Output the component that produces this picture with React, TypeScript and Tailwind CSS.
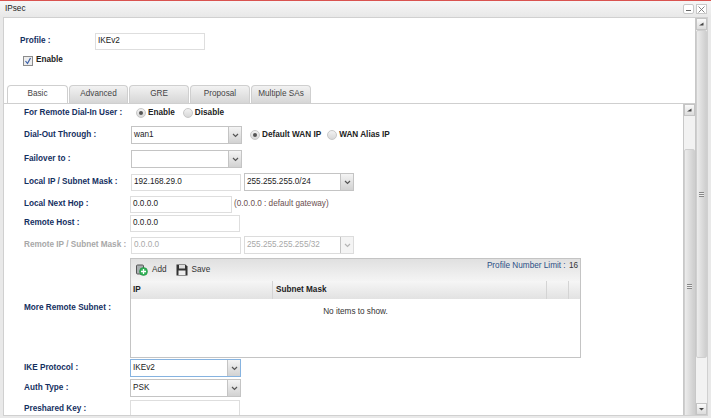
import type { ReactNode } from "react";

function Arrow({ disabled }: { disabled?: boolean }) {
  return (
    <div
      className={`flex h-full w-[13px] items-center justify-center border-l border-[#c4c4c4] ${
        disabled ? "bg-[#f4f4f4]" : "bg-gradient-to-b from-[#f4f4f4] to-[#d2d2d2]"
      }`}
    >
      <svg width="7" height="5" viewBox="0 0 7 5">
        <path d="M1 1l2.5 2.5L6 1" fill="none" stroke={disabled ? "#b5b5b5" : "#555"} strokeWidth="1.2" />
      </svg>
    </div>
  );
}

function Select({
  value,
  width,
  disabled,
  focused,
}: {
  value?: string;
  width: string;
  disabled?: boolean;
  focused?: boolean;
}) {
  return (
    <div
      className={`flex ${width} h-[18px] items-center border ${
        focused ? "border-[#86b3e0]" : disabled ? "border-[#dcdcdc]" : "border-[#c4c4c4]"
      } bg-white`}
    >
      <span className={`flex-1 pl-[2px] text-[8.2px] ${disabled ? "text-[#a8a8a8]" : "text-[#222]"}`}>{value}</span>
      <Arrow disabled={disabled} />
    </div>
  );
}

function Input({
  value,
  width = "w-[110px]",
  height = "h-[17px]",
  disabled,
}: {
  value?: string;
  width?: string;
  height?: string;
  disabled?: boolean;
}) {
  return (
    <div
      className={`flex ${width} ${height} items-center border border-[#dedede] pl-[2px] text-[8.2px] ${
        disabled ? "text-[#a8a8a8]" : "text-[#222]"
      } bg-white`}
    >
      {value}
    </div>
  );
}

function Radio({ checked, label }: { checked?: boolean; label: string }) {
  return (
    <div className="flex items-center gap-[2px]">
      <div className="flex h-[10px] w-[10px] items-center justify-center rounded-full border border-[#c8c8c8] bg-gradient-to-b from-[#f2f2f2] to-[#d8d8d8]">
        {checked && <div className="h-[4px] w-[4px] rounded-full bg-[#555]" />}
      </div>
      <span className="text-[8.2px] font-bold text-[#222]">{label}</span>
    </div>
  );
}

function Row({
  label,
  height,
  disabled,
  children,
}: {
  label: string;
  height: string;
  disabled?: boolean;
  children: ReactNode;
}) {
  return (
    <div className={`flex ${height} items-center`}>
      <div className={`w-[106px] shrink-0 whitespace-nowrap text-[8.2px] font-bold ${disabled ? "text-[#a8a8a8]" : "text-[#15305f]"}`}>
        {label}
      </div>
      {children}
    </div>
  );
}

function ScrollBar({ thumbTop, thumbHeight, noEnd }: { thumbTop: string; thumbHeight: string; noEnd?: boolean }) {
  return (
    <div className="flex w-[12px] shrink-0 flex-col overflow-hidden border-l border-[#c8c8c8] bg-[#f2f2f2]">
      <div className="flex h-[12px] shrink-0 items-center justify-center border border-[#c4c4c4] bg-gradient-to-b from-[#fafafa] to-[#dcdcdc]">
        <svg width="5" height="4" viewBox="0 0 5 4">
          <path d="M0 3.5L4.5 0.5V3.5Z" fill="#444" />
        </svg>
      </div>
      <div className="min-h-0 flex-1">
        <div className={`${thumbTop} ${thumbHeight} flex items-center justify-center rounded-[2px] border border-[#cfcfcf] bg-gradient-to-r from-[#ececec] to-[#cfcfcf]`}>
          <div className="h-[5px] w-[5px] bg-[repeating-linear-gradient(#888_0,#888_1px,#eee_1px,#eee_2px)]" />
        </div>
      </div>
      {!noEnd && (
        <div className="flex h-[12px] shrink-0 items-center justify-center border border-[#c4c4c4] bg-gradient-to-b from-[#fafafa] to-[#dcdcdc]">
          <svg width="5" height="4" viewBox="0 0 5 4">
            <path d="M0 1h5L2.5 3.5Z" fill="#444" />
          </svg>
        </div>
      )}
    </div>
  );
}

function Tab({ label, active, width }: { label: string; active?: boolean; width: string }) {
  return (
    <div
      className={`flex ${width} h-[18px] items-center justify-center rounded-t-[4px] border border-b-0 border-[#cfcfcf] text-[8.2px] text-[#444] ${
        active ? "bg-white" : "bg-gradient-to-b from-[#f2f2f2] to-[#d6d6d6]"
      }`}
    >
      {label}
    </div>
  );
}

export default function App() {
  return (
    <div className="flex h-[418px] w-[711px] flex-col overflow-hidden border-t border-[#d9534f] bg-[#e9e9e9] font-['Liberation_Sans',Arial,sans-serif]">
      <div className="flex h-[16px] shrink-0 items-center justify-between bg-gradient-to-b from-[#f6f6f6] to-[#e8e8e8] pl-[5px] pr-[4px]">
        <span className="text-[8.2px] text-[#222]">IPsec</span>
        <div className="flex gap-[2px]">
          <div className="flex h-[10px] w-[11px] items-end justify-center rounded-[2px] border border-[#c8c8c8] bg-white pb-[2px]">
            <div className="h-[1px] w-[5px] bg-[#666]" />
          </div>
          <div className="flex h-[10px] w-[11px] items-center justify-center border border-[#c8c8c8] bg-white">
            <svg width="7" height="7" viewBox="0 0 7 7">
              <path d="M0.5 0.5l6 6M6.5 0.5l-6 6" stroke="#777" strokeWidth="0.9" />
            </svg>
          </div>
        </div>
      </div>

      <div className="mx-[3px] mb-[2px] flex min-h-0 flex-1 border border-[#d0d0d0] bg-white">
        <div className="flex min-w-0 flex-1 flex-col">
          <div className="flex h-[32px] shrink-0 items-end pl-[16px]">
            <div className="flex items-center">
              <span className="w-[75px] text-[8.2px] font-bold text-[#15305f]">Profile :</span>
              <Input value="IKEv2" />
            </div>
          </div>
          <div className="ml-[19px] mt-[5px] flex h-[11px] items-center gap-[3px]">
            <div className="flex h-[10px] w-[10px] items-center justify-center border border-[#8c8c8c] bg-[#eee]">
              <svg width="8" height="8" viewBox="0 0 8 8">
                <path d="M1.5 4l2 2.5L6.5 1" fill="none" stroke="#3a5fa8" strokeWidth="1.2" />
              </svg>
            </div>
            <span className="text-[8.2px] font-bold text-[#222]">Enable</span>
          </div>
          <div className="ml-[3px] mt-[19px] flex shrink-0 gap-[1px]">
            <Tab label="Basic" active width="w-[61px]" />
            <Tab label="Advanced" width="w-[59px]" />
            <Tab label="GRE" width="w-[60px]" />
            <Tab label="Proposal" width="w-[60px]" />
            <Tab label="Multiple SAs" width="w-[60px]" />
          </div>
          <div className="flex min-h-0 flex-1 border-t border-[#cfcfcf]">
            <div className="min-w-0 flex-1 overflow-hidden pl-[20px]">
              <div className="flex flex-col">
                <Row label="For Remote Dial-In User :" height="h-[19px]">
                  <div className="ml-[6px] flex gap-[8px]">
                    <Radio checked label="Enable" />
                    <Radio label="Disable" />
                  </div>
                </Row>
                <Row label="Dial-Out Through :" height="h-[24px]">
                  <div className="ml-[1px]">
                    <Select value="wan1" width="w-[111px]" />
                  </div>
                  <div className="ml-[8px] flex gap-[6px]">
                    <Radio checked label="Default WAN IP" />
                    <Radio label="WAN Alias IP" />
                  </div>
                </Row>
                <Row label="Failover to :" height="h-[24px]">
                  <div className="ml-[1px]">
                    <Select width="w-[111px]" />
                  </div>
                </Row>
                <Row label="Local IP / Subnet Mask :" height="h-[22px]">
                  <div className="ml-[1px]">
                    <Input value="192.168.29.0" width="w-[110px]" />
                  </div>
                  <div className="ml-[3px]">
                    <Select value="255.255.255.0/24" width="w-[110px]" />
                  </div>
                </Row>
                <Row label="Local Next Hop :" height="h-[22px]">
                  <Input value="0.0.0.0" width="w-[102px]" />
                  <span className="ml-[2px] text-[8.2px] text-[#6b4f4f]">(0.0.0.0 : default gateway)</span>
                </Row>
                <Row label="Remote Host :" height="h-[17px]">
                  <Input value="0.0.0.0" />
                </Row>
                <Row label="Remote IP / Subnet Mask :" height="h-[26px]" disabled>
                  <div className="ml-[1px]">
                    <Input value="0.0.0.0" width="w-[110px]" disabled />
                  </div>
                  <div className="ml-[3px]">
                    <Select value="255.255.255.255/32" width="w-[110px]" disabled />
                  </div>
                </Row>
                <Row label="More Remote Subnet :" height="h-[100px]">
                  <div className="flex h-[100px] w-[451px] flex-col border border-[#c4c4c4]">
                    <div className="flex h-[22px] shrink-0 items-start justify-between bg-gradient-to-b from-[#e0e0e0] to-[#f4f4f4]">
                      <div className="mt-[5px] flex items-center pl-[5px] text-[8.2px] text-[#333]">
                        <svg width="12" height="12" viewBox="0 0 12 12">
                          <rect x="0.5" y="1" width="7" height="9" rx="1" fill="#aab0b2" stroke="#555" />
                          <circle cx="7.5" cy="7.5" r="4" fill="#2fb457" stroke="#1f7f3b" strokeWidth="0.5" />
                          <path d="M7.5 5v5M5 7.5h5" stroke="#fff" strokeWidth="1.3" />
                        </svg>
                        <span className="ml-[4px]">Add</span>
                        <svg className="ml-[9px]" width="12" height="12" viewBox="0 0 12 12">
                          <path d="M0.5 0.5h9l2 2v9h-11z" fill="#333" />
                          <rect x="3" y="1" width="6" height="3.5" fill="#ddd" />
                          <rect x="2.5" y="6.5" width="7" height="4.5" fill="#eee" />
                        </svg>
                        <span className="ml-[4px]">Save</span>
                      </div>
                      <div className="mt-[1px] pr-[2px] text-[8.2px] text-[#2b4f85]">
                        Profile Number Limit : <span className="ml-[1px] text-[#333]">16</span>
                      </div>
                    </div>
                    <div className="flex h-[18px] shrink-0 bg-gradient-to-b from-[#f6f6f6] to-[#e2e2e2] text-[8.2px] font-bold text-[#222]">
                      <div className="flex w-[142px] items-center border-r border-[#d4d4d4] pl-[2px]">IP</div>
                      <div className="flex w-[274px] items-center border-r border-[#d4d4d4] pl-[3px]">Subnet Mask</div>
                      <div className="w-[22px] border-r border-[#d4d4d4]" />
                      <div className="flex-1" />
                    </div>
                    <div className="flex-1 pt-[7px] text-center text-[8.2px] text-[#333]">No items to show.</div>
                  </div>
                </Row>
                <Row label="IKE Protocol :" height="h-[20px]">
                  <Select value="IKEv2" width="w-[111px]" focused />
                </Row>
                <Row label="Auth Type :" height="h-[20px]">
                  <Select value="PSK" width="w-[111px]" />
                </Row>
                <Row label="Preshared Key :" height="h-[22px]">
                  <Input width="w-[110px]" height="h-[18px]" />
                </Row>
              </div>
            </div>
            <ScrollBar thumbTop="mt-[33px]" thumbHeight="h-[274px]" noEnd />
          </div>
        </div>
        <ScrollBar thumbTop="mt-0" thumbHeight="h-[328px]" />
      </div>
    </div>
  );
}
